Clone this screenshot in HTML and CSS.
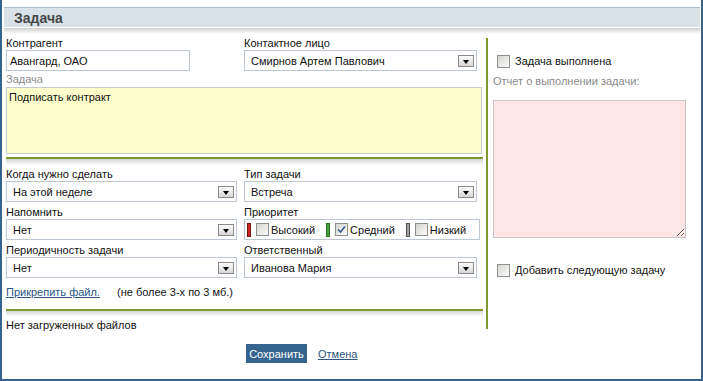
FILE: index.html
```html
<!DOCTYPE html>
<html lang="ru">
<head>
  <meta charset="UTF-8">
  <title>Задача</title>
  <link rel="stylesheet" href="styles.css">
</head>
<body>
  <div class="frame">
    <div class="title">Задача</div>
    <div class="title-shade"></div>

    <div class="main">
      <div class="left">
        <div class="grid">
          <div>
            <div class="label">Контрагент</div>
            <div class="box input">Авангард, ОАО</div>
          </div>
          <div>
            <div class="label">Контактное лицо</div>
            <div class="box select c2"><span>Смирнов Артем Павлович</span><span class="arrow"></span></div>
          </div>
        </div>

        <div class="label muted">Задача</div>
        <textarea class="memo">Подписать контракт</textarea>

        <div class="sep"></div>

        <div class="grid">
          <div>
            <div class="label">Когда нужно сделать</div>
            <div class="box select c1"><span>На этой неделе</span><span class="arrow"></span></div>
          </div>
          <div>
            <div class="label">Тип задачи</div>
            <div class="box select c2"><span>Встреча</span><span class="arrow"></span></div>
          </div>
          <div>
            <div class="label">Напомнить</div>
            <div class="box select c1"><span>Нет</span><span class="arrow"></span></div>
          </div>
          <div>
            <div class="label">Приоритет</div>
            <div class="box prio">
              <span class="bar high"></span><span class="cb"></span><span class="prio-text">Высокий</span>
              <span class="bar mid"></span><span class="cb checked"><svg width="11" height="11" viewBox="0 0 11 11"><path d="M2 5.5 L4.5 8 L9 2.5" fill="none" stroke="#3d5c96" stroke-width="1.6"/></svg></span><span class="prio-text">Средний</span>
              <span class="bar low"></span><span class="cb"></span><span class="prio-text">Низкий</span>
            </div>
          </div>
          <div>
            <div class="label">Периодичность задачи</div>
            <div class="box select c1"><span>Нет</span><span class="arrow"></span></div>
          </div>
          <div>
            <div class="label">Ответственный</div>
            <div class="box select c2"><span>Иванова Мария</span><span class="arrow"></span></div>
          </div>
        </div>

        <div class="attach">
          <a href="#" class="link">Прикрепить файл.</a>
          <span class="limit">(не более 3-х по 3 мб.)</span>
        </div>

        <div class="sep sep-low"></div>

        <div class="files">Нет загруженных файлов</div>
      </div>

      <div class="right">
        <div class="check-row"><span class="cb"></span><span class="check-text">Задача выполнена</span></div>
        <div class="hint">Отчет о выполнении задачи:</div>
        <textarea class="report"></textarea>
        <div class="check-row next"><span class="cb"></span><span class="check-text">Добавить следующую задачу</span></div>
      </div>
    </div>

    <div class="actions">
      <button class="save">Сохранить</button>
      <a href="#" class="link cancel">Отмена</a>
    </div>
  </div>
</body>
</html>
```

FILE: styles.css
```css
* {
  box-sizing: border-box;
}

body {
  margin: 0;
  font-family: "Liberation Sans", Arial, sans-serif;
  font-size: 11px;
  color: #111;
  background-color: #fff;
}

.frame {
  width: 703px;
  height: 381px;
  border: 2px solid #34648f;
  border-top: none;
  padding-top: 7px;
}

.title {
  margin: 0 1px 0 2px;
  height: 20px;
  padding: 1px 0 0 10px;
  line-height: 18px;
  border-top: 1px solid #a9bccb;
  background-color: #d8e2e8;
  font-size: 14px;
  font-weight: bold;
  color: #474747;
}

.title-shade {
  margin: 0 1px 0 2px;
  height: 7px;
  border-top: 1px solid #fff;
  background: linear-gradient(#d0d0d0, #fff);
}

.main {
  display: flex;
  padding-top: 2px;
}

.left {
  width: 477px;
  margin-left: 4px;
  margin-right: 3px;
}

.right {
  flex: 1;
  margin: 2px 0 3px;
  padding: 16px 0 0 5px;
  border-left: 2px solid #7f9a2a;
}

.grid {
  display: grid;
  grid-template-columns: 238px 239px;
  row-gap: 3px;
}

.label {
  height: 14px;
  line-height: 14px;
  white-space: nowrap;
}

.label.muted {
  margin-top: 1px;
  color: #8c8c8c;
}

.box {
  height: 21px;
  display: flex;
  align-items: center;
  border: 1px solid #bdc7d1;
  background-color: #fff;
}

.input {
  width: 184px;
  padding: 1px 0 0 3px;
}

.select {
  justify-content: space-between;
  padding: 1px 2px 0 6px;
}

.select.c1 {
  width: 231px;
}

.select.c2 {
  width: 233px;
}

.arrow {
  position: relative;
  width: 16px;
  height: 12px;
  margin-top: -1px;
  border: 1px solid #8a8a8a;
  background: linear-gradient(#fcfcfc, #d6d6d6);
}

.arrow::after {
  content: "";
  position: absolute;
  left: 4px;
  top: 4px;
  border-top: 4px solid #000;
  border-left: 3px solid transparent;
  border-right: 3px solid transparent;
}

.memo {
  display: block;
  width: 476px;
  height: 67px;
  margin: 1px 0 0;
  padding: 3px 2px;
  border: 1px solid #c3cad0;
  background-color: #ffffcc;
  font-family: inherit;
  font-size: 11px;
  color: #111;
  resize: none;
  outline: none;
}

.sep {
  margin-top: 3px;
  height: 10px;
  border-top: 2px solid #7f9a2a;
  background: linear-gradient(#d6d6d6, #fff 80%);
}

.sep-low {
  margin-top: 10px;
  height: 9px;
}

.prio {
  width: 236px;
  padding: 0 0 0 2px;
}

.bar {
  width: 4px;
  height: 14px;
  margin-right: 5px;
  border: 1px solid;
}

.bar.high {
  background-color: #cf2525;
  border-color: #761414;
}

.bar.mid {
  background-color: #45a33a;
  border-color: #2a7020;
}

.bar.low {
  background-color: #a2a2a2;
  border-color: #505050;
}

.prio-text {
  margin: 1px 11px 0 2px;
}

.cb {
  display: inline-flex;
  align-items: center;
  justify-content: center;
  width: 13px;
  height: 13px;
  flex-shrink: 0;
  border: 1px solid #8e9090;
  background: linear-gradient(135deg, #d4d4d0, #fbfbf9);
}

.attach {
  margin-top: 7px;
  height: 14px;
  line-height: 14px;
}

.link {
  color: #2a5585;
  text-decoration: underline;
}

.limit {
  margin-left: 14px;
}

.files {
  height: 14px;
  line-height: 14px;
}

.check-row {
  display: flex;
  align-items: center;
  height: 14px;
  padding-left: 4px;
}

.check-text {
  margin-left: 5px;
}

.check-row.next {
  margin-top: 25px;
}

.hint {
  margin-top: 6px;
  height: 14px;
  line-height: 14px;
  color: #8a8a8a;
}

.report {
  display: block;
  width: 193px;
  height: 138px;
  margin: 12px 0 0;
  border: 1px solid #c5c5c5;
  background-color: #ffe6e6;
  outline: none;
}

.actions {
  display: flex;
  align-items: center;
  margin-top: 12px;
  padding-left: 244px;
}

.save {
  width: 61px;
  height: 19px;
  padding: 0;
  border: none;
  background-color: #35658f;
  color: #fff;
  font-family: inherit;
  font-size: 11px;
}

.cancel {
  margin-left: 11px;
}
```
